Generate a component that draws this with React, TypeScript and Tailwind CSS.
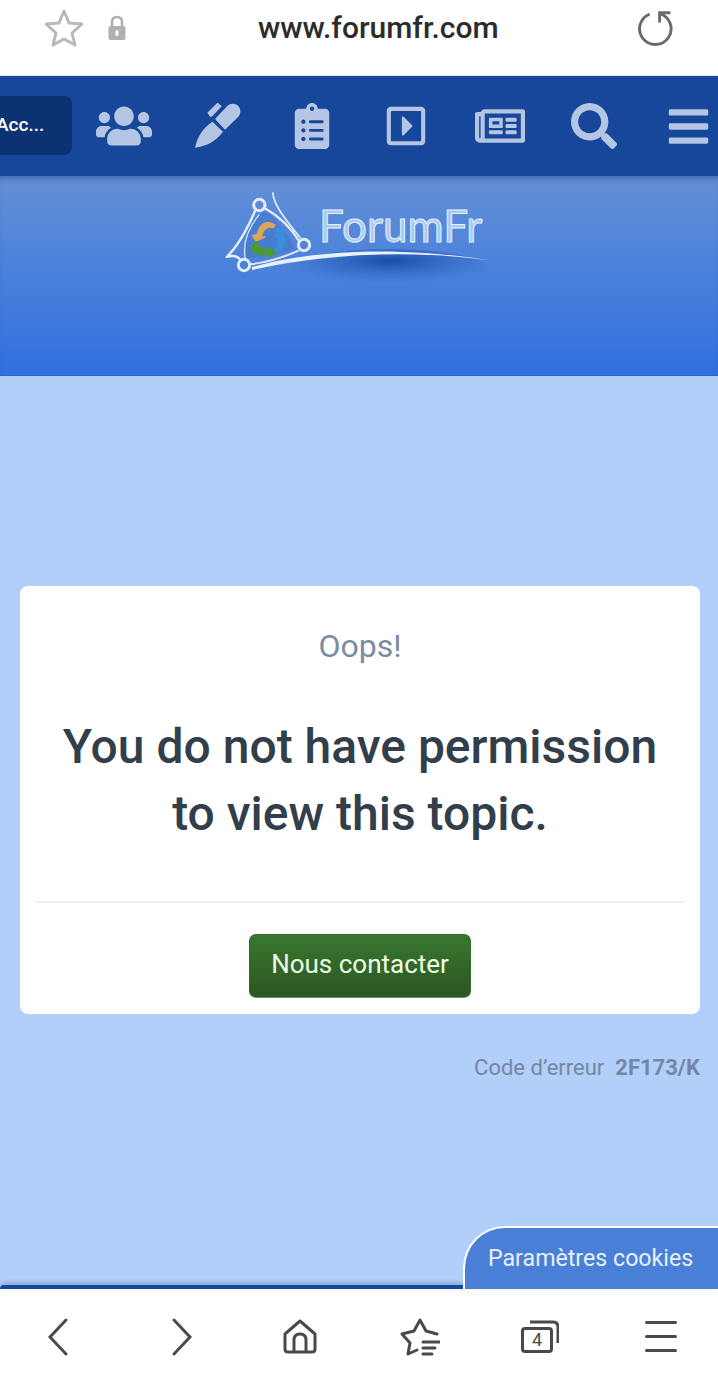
import { FaClipboardList, FaRegCaretSquareRight, FaRegNewspaper, FaSearch, FaUsers, FaBars } from 'react-icons/fa';

const sans = 'font-["Roboto",sans-serif]';

function Logo() {
  return (
    <svg width="310" height="120" viewBox="0 0 310 120" fill="none" className="absolute inset-0 blur-[0.4px]">
      <defs>
        <radialGradient id="swooshShade" cx="0.5" cy="0.3" r="0.55">
          <stop offset="0" stopColor="#174aa0" stopOpacity="0.95" />
          <stop offset="1" stopColor="#2a62c4" stopOpacity="0" />
        </radialGradient>
      </defs>
      <ellipse cx="190" cy="94" rx="100" ry="20" fill="url(#swooshShade)" />
      <path d="M52 92 C110 76 190 70 288 85 C200 74 120 80 52 95 Z" fill="#e8f1fc" />
      <g transform="translate(20 10) scale(0.3333)">
        <path d="M110 90 C80 130 70 180 78 222 C120 210 170 215 225 190 C200 140 170 105 140 78 Z" fill="#3f74c8" opacity="0.55" />
        <path d="M106 76 C85 125 60 178 20 216 C40 210 55 215 62 226" stroke="#e6effb" strokeWidth="7" strokeLinejoin="round" />
        <path d="M118 88 C88 125 66 170 76 222" stroke="#d4e3f8" strokeWidth="4" />
        <path d="M132 68 C175 92 215 130 240 172" stroke="#e6effb" strokeWidth="7" />
        <path d="M158 22 C162 62 196 104 242 160" stroke="#e6effb" strokeWidth="5" />
        <path d="M88 238 C110 236 170 226 238 196" stroke="#dce9fa" strokeWidth="6" />
        <circle cx="118" cy="60" r="17" stroke="#e2ecfa" strokeWidth="9" />
        <circle cx="252" cy="180" r="17" stroke="#e2ecfa" strokeWidth="9" />
        <circle cx="72" cy="240" r="17" stroke="#e2ecfa" strokeWidth="9" />
        <path d="M98 152 L112 148 C118 120 138 102 165 120 L160 128 C140 122 128 135 124 156 L136 156 L108 168 Z" fill="#dfa653" stroke="#dfa653" strokeWidth="4" />
        <path d="M170 130 L192 138 L188 148 C202 170 190 198 168 202 L162 192 C176 186 180 168 172 152 L166 156 Z" fill="#3c8fdc" stroke="#3c8fdc" strokeWidth="4" />
        <path d="M98 178 L112 172 C118 190 134 196 146 194 L148 188 L168 204 L146 214 L146 208 C120 212 98 204 94 192 Z" fill="#4c9a32" stroke="#4c9a32" strokeWidth="4" />
      </g>
    </svg>
  );
}

function PenIcon() {
  return (
    <svg width="80" height="70" viewBox="0 0 240 210" fill="currentColor" className="ml-[2px]">
      <path d="M48 170 C55 135 75 108 100 92 L132 122 C110 150 85 165 48 170 Z" />
      <path d="M108 84 L140 50 C150 36 170 34 180 48 C188 60 184 72 175 80 L138 116 Z" />
      <path d="M85 65 L112 38 Q116 34 120 38 L128 46 L100 76 Q96 79 92 76 Z" />
    </svg>
  );
}

function BrowserTop() {
  return (
    <div className="h-[76px] bg-white flex items-center shrink-0 pl-[45px] pb-[19px] border-b border-[#d9e6f7]">
      <svg width="38" height="38" viewBox="0 0 38 38" fill="none" stroke="#b9b9b9" strokeWidth="3" strokeLinejoin="round" className="shrink-0">
        <path d="M19 2 L24 14 L37 15 L27 24 L30 36 L19 30 L8 36 L11 24 L1 15 L14 14 Z" />
      </svg>
      <svg width="18" height="26" viewBox="0 0 18 26" className="ml-[25px] shrink-0">
        <path d="M4 12 V7 Q4 2 9 2 Q14 2 14 7 V12" fill="none" stroke="#b0b0b0" strokeWidth="2.5" />
        <rect x="0.5" y="11" width="17" height="14" rx="2" fill="#b0b0b0" />
        <rect x="7.5" y="15" width="3" height="6" rx="1.5" fill="#fff" />
      </svg>
      <div className={`${sans} text-[30px] leading-none font-medium text-[#2b2b2b] ml-[132px]`}>www.forumfr.com</div>
      <svg width="36" height="38" viewBox="12 8 40 42" fill="none" stroke="#6a6a6a" strokeWidth="3.2" className="ml-auto mr-[44px] shrink-0">
        <path d="M25 13.5 A17.5 17.5 0 1 0 36 13" />
        <path d="M48 12 H36 V23" />
      </svg>
    </div>
  );
}

const navIcons = [
  <FaUsers className="text-[56px]" />,
  <PenIcon />,
  <FaClipboardList className="text-[46px]" />,
  <FaRegCaretSquareRight className="text-[44px]" />,
  <FaRegNewspaper className="text-[50px]" />,
  <FaSearch className="text-[46px]" />,
  <FaBars className="text-[45px]" />,
];

function Nav() {
  return (
    <div className="h-[100px] bg-[#16479a] shrink-0 flex items-center text-[#b4c6e4] relative z-10 overflow-hidden">
      <div className={`${sans} w-[72px] h-[59px] -mt-[1px] bg-[#0d3273] rounded-r-[8px] flex items-center text-white font-medium text-[19px] overflow-hidden shrink-0 mr-[5px]`}>
        <span className="-ml-[4px] -mt-[1px]">Acc...</span>
      </div>
      {navIcons.map((icon, i) => (
        <div key={i} className="w-[94px] h-[70px] shrink-0 flex items-center justify-center">
          {icon}
        </div>
      ))}
    </div>
  );
}

function Banner() {
  return (
    <div className="h-[200px] shrink-0 bg-gradient-to-b from-[#6390d6] to-[#2f6fe0] flex justify-center border-b border-[#2a67d6] shadow-[inset_0_6px_6px_-4px_rgba(20,50,110,0.45)]">
      <div className="relative w-[310px] h-[120px] -ml-[8px] -mt-[1px]">
        <Logo />
        <div className='absolute left-[119px] top-[28px] font-["Lato",sans-serif] text-[44px] leading-none text-[#a8caf0] [-webkit-text-stroke:1px_#e6f1fd]'>ForumFr</div>
      </div>
    </div>
  );
}

function ErrorCard() {
  return (
    <div className={`${sans} ml-[20px] mr-[18px] mt-[210px] h-[428px] bg-white rounded-[8px] px-[16px] flex flex-col items-center`}>
      <div className="text-[32px] text-[#7a8ba3] mt-[41px] leading-[38px]">Oops!</div>
      <h1 className="text-[48px] font-medium text-[#323e4a] text-center leading-[67px] mt-[48px] whitespace-nowrap">
        You do not have permission
        <br />
        to view this topic.
      </h1>
      <div className="w-full border-t-2 border-[#edeff2] mt-[54px]" />
      <button className="mt-[31px] w-[222px] h-[64px] pb-[3px] rounded-[7px] bg-gradient-to-b from-[#38782f] to-[#2c5622] text-[26px] text-[#eefbe9] border border-[#2f6a28] border-b-[#5d9a52]">
        Nous contacter
      </button>
    </div>
  );
}

function BottomBar() {
  return (
    <div className="h-[95px] bg-white shrink-0 flex items-center pl-[48px] text-[#4a4a4a]">
      <svg width="20" height="38" viewBox="0 0 20 38" fill="none" stroke="currentColor" strokeWidth="3" strokeLinecap="round">
        <path d="M18 2 L2 19 L18 36" />
      </svg>
      <svg width="20" height="38" viewBox="0 0 20 38" fill="none" stroke="currentColor" strokeWidth="3" strokeLinecap="round" className="ml-[104px]">
        <path d="M2 2 L18 19 L2 36" />
      </svg>
      <svg width="34" height="35" viewBox="0 0 34 35" fill="none" stroke="currentColor" strokeWidth="3" strokeLinejoin="round" className="ml-[91px]">
        <path d="M2 15 L17 2 L32 15 V30 Q32 33 29 33 H5 Q2 33 2 30 Z" />
        <path d="M11 33 V21 Q11 15 17 15 Q23 15 23 21 V33" />
      </svg>
      <svg width="40" height="38" viewBox="10 8 40 38" fill="none" stroke="currentColor" strokeWidth="3" strokeLinecap="round" strokeLinejoin="round" className="ml-[83px]">
        <path d="M47 24 L36 21 L30 10 L24 21 L12 24 L20 33 L18 44 L27 40" />
        <path d="M33 32 H49 M33 38 H45 M33 44 H42" />
      </svg>
      <div className="relative w-[38px] h-[33px] ml-[81px]">
        <div className={`${sans} absolute left-0 bottom-0 w-[32px] h-[26px] border-[3px] border-current rounded-[4px] flex items-center justify-center text-[18px] leading-none`}>4</div>
        <svg width="38" height="33" viewBox="0 0 38 33" fill="none" stroke="currentColor" strokeWidth="3" className="absolute inset-0">
          <path d="M9 2 H32 Q37 2 37 7 V23" />
        </svg>
      </div>
      <div className="w-[32px] flex flex-col gap-[11px] ml-[86px]">
        <div className="h-[3px] bg-current rounded-full" />
        <div className="h-[3px] bg-current rounded-full" />
        <div className="h-[3px] bg-current rounded-full" />
      </div>
    </div>
  );
}

export default function App() {
  return (
    <div className="w-[718px] h-[1384px] flex flex-col overflow-hidden bg-[#b1cff8]">
      <BrowserTop />
      <Nav />
      <Banner />
      <div className="flex-1 relative">
        <ErrorCard />
        <div className={`${sans} mt-[41px] pr-[18px] flex justify-end text-[22px] leading-[26px] text-[#7587a3]`}>
          <span>Code d’erreur</span>
          <span className="font-bold ml-[11px]">2F173/K</span>
        </div>
        <div className="absolute left-0 right-0 bottom-0 h-[4px] bg-[#16479a] rounded-tl-[4px] shadow-[0_-2px_4px_rgba(20,50,110,0.3)]" />
        <div className={`${sans} absolute right-0 bottom-0 w-[255px] h-[63px] bg-[#4a7fd8] border-t-2 border-l-2 border-white rounded-tl-[42px] text-[23.2px] text-[#e6f0fd] pl-[23px] pt-[13px]`}>
          Paramètres cookies
        </div>
      </div>
      <BottomBar />
    </div>
  );
}
